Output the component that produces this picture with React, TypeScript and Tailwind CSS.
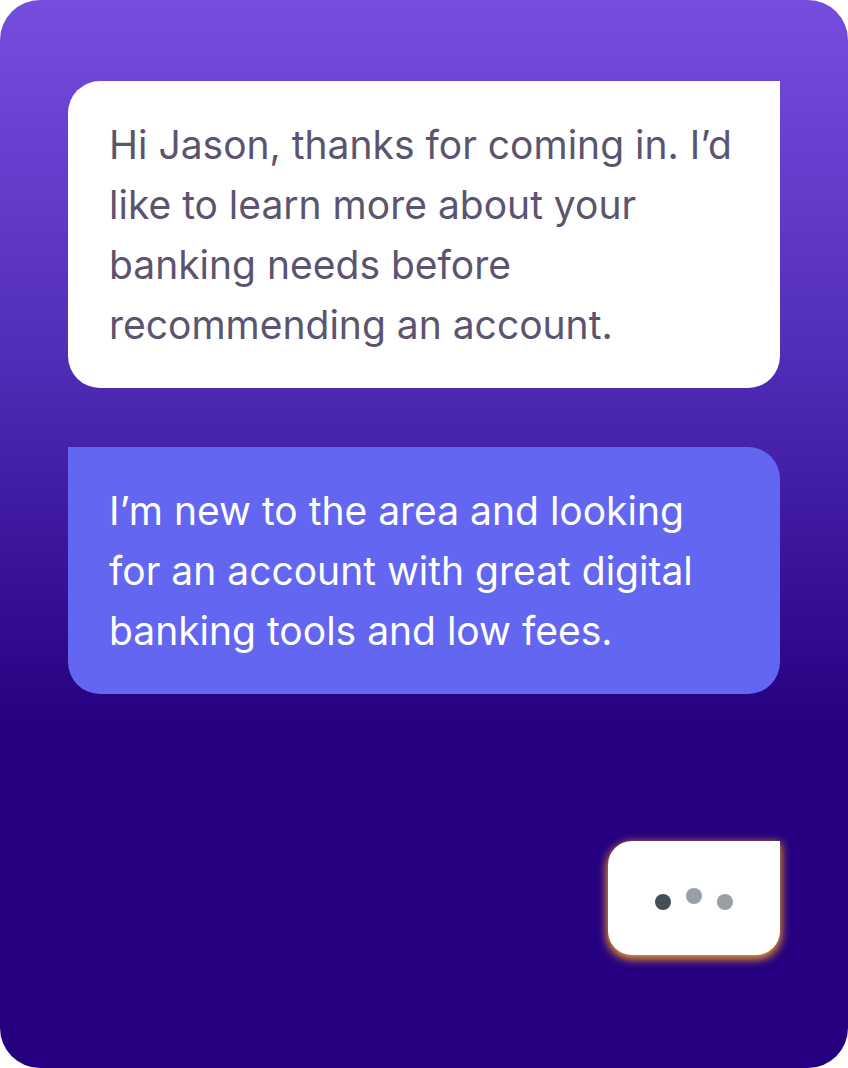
export default function App() {
  return (
    <div className="w-[848px] h-[1068px] bg-white">
      <div
        className="flex flex-col h-full rounded-[40px] px-[68px] pt-[81px] bg-[linear-gradient(180deg,#774de0_0%,#4f2bb5_35%,#250080_68%,#250080_100%)]"
        style={{ fontFamily: 'Inter, "Noto Sans", sans-serif' }}
      >
        {/* banker message */}
        <div className="bg-white rounded-[32px] rounded-tr-none pl-[41px] pr-[36px] pt-[34px] pb-[33px] text-[39px] leading-[60px] text-[#5b5470]">
          Hi Jason, thanks for coming in. I’d like to learn more about your banking needs before recommending an account.
        </div>

        {/* customer reply */}
        <div className="mt-[59px] bg-[#6366f1] rounded-[32px] rounded-tl-none pl-[41px] pr-[60px] pt-[34px] pb-[33px] text-[39px] leading-[60px] text-white">
          I’m new to the area and looking for an account with great digital banking tools and low fees.
        </div>

        {/* typing indicator */}
        <div className="flex justify-end mt-[147px]">
          <div className="w-[172px] h-[114px] pb-[4px] bg-white rounded-[24px] rounded-tr-none flex items-center justify-center gap-[15px] shadow-[0_3px_10px_1px_rgba(250,165,30,1)]">
            <span className="w-[16px] h-[16px] rounded-full bg-[#444f57] mt-[12px]" />
            <span className="w-[16px] h-[16px] rounded-full bg-[#999ea4]" />
            <span className="w-[16px] h-[16px] rounded-full bg-[#999ea4] mt-[12px]" />
          </div>
        </div>
      </div>
    </div>
  );
}
